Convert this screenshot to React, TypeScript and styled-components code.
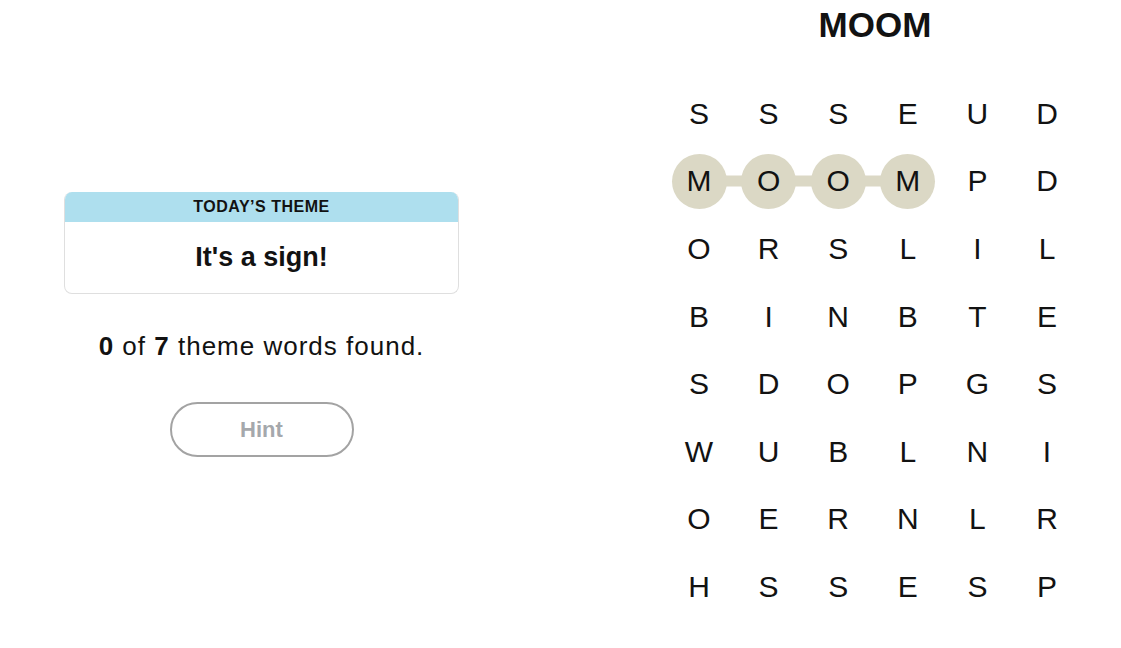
import React from 'react';
import styled, { createGlobalStyle } from 'styled-components';

const GRID = [
  'SSSEUD',
  'MOOMPD',
  'ORSLIL',
  'BINBTE',
  'SDOPGS',
  'WUBLNI',
  'OERNLR',
  'HSSESP',
];

// cells of the word being traced (row, col), in order
const PATH: [number, number][] = [
  [1, 0],
  [1, 1],
  [1, 2],
  [1, 3],
];

const GlobalStyle = createGlobalStyle`
  body {
    margin: 0;
    background: #ffffff;
    font-family: 'Liberation Sans', Arial, sans-serif;
    color: #121212;
  }
`;

const Page = styled.div`
  display: flex;
  width: 1121px;
  height: 648px;
`;

const Side = styled.section`
  width: 523px;
  padding-top: 192px;
  display: flex;
  flex-direction: column;
  align-items: center;
`;

const ThemeCard = styled.div`
  width: 393px;
  border: 1px solid #dfdfdf;
  border-top: none;
  border-radius: 8px;
  overflow: hidden;
`;

const ThemeHeader = styled.div`
  height: 30px;
  background: #aedfee;
  display: flex;
  align-items: center;
  justify-content: center;
  font-size: 16px;
  font-weight: 700;
  letter-spacing: 0.5px;
  text-transform: uppercase;
  color: #121212;
`;

const ThemeBody = styled.div`
  height: 71px;
  display: flex;
  align-items: center;
  justify-content: center;
  font-size: 27px;
  font-weight: 700;
`;

const Progress = styled.p`
  margin: 37px 0 0;
  font-size: 26px;
  line-height: 30px;
  letter-spacing: 1px;
  b {
    font-weight: 700;
  }
`;

const HintButton = styled.button`
  margin-top: 41px;
  width: 184px;
  height: 55px;
  border: 2px solid #a3a3a3;
  border-radius: 28px;
  background: #ffffff;
  font-family: 'Liberation Sans', Arial, sans-serif;
  font-size: 22px;
  font-weight: 700;
  color: #a5a8ac;
  cursor: default;
`;

const Board = styled.section`
  margin-left: 141px;
  width: 418px;
  display: flex;
  flex-direction: column;
  align-items: center;
`;

const Word = styled.h1`
  margin: 5px 0 0 4px;
  font-size: 35px;
  line-height: 40px;
  font-weight: 700;
`;

const Grid = styled.div`
  margin-top: 35px;
  display: grid;
  grid-template-columns: repeat(6, 69.6px);
  grid-auto-rows: 67.6px;
`;

const Cell = styled.div<{ $link?: boolean }>`
  position: relative;
  display: flex;
  align-items: center;
  justify-content: center;

  ${({ $link }) =>
    $link &&
    `
    &::before {
      content: '';
      position: absolute;
      left: 50%;
      top: 50%;
      width: 100%;
      height: 11px;
      transform: translateY(-50%);
      background: #dbd8c5;
    }
  `}
`;

const Letter = styled.span<{ $on?: boolean }>`
  position: relative;
  z-index: 1;
  width: 55px;
  height: 55px;
  border-radius: 50%;
  display: flex;
  align-items: center;
  justify-content: center;
  font-size: 30px;
  background: ${({ $on }) => ($on ? '#dbd8c5' : 'transparent')};
`;

const isOn = (r: number, c: number) =>
  PATH.some(([pr, pc]) => pr === r && pc === c);

const linksRight = (r: number, c: number) =>
  PATH.some(
    ([pr, pc], i) =>
      pr === r && pc === c && PATH[i + 1] && PATH[i + 1][0] === r && PATH[i + 1][1] === c + 1
  );

export default function App() {
  return (
    <>
      <GlobalStyle />
      <Page>
        <Side>
          <ThemeCard>
            <ThemeHeader>Today’s Theme</ThemeHeader>
            <ThemeBody>It's a sign!</ThemeBody>
          </ThemeCard>
          <Progress>
            <b>0</b> of <b>7</b> theme words found.
          </Progress>
          <HintButton>Hint</HintButton>
        </Side>
        <Board>
          <Word>MOOM</Word>
          <Grid>
            {GRID.map((row, r) =>
              row.split('').map((ch, c) => (
                <Cell key={`${r}-${c}`} $link={linksRight(r, c)}>
                  <Letter $on={isOn(r, c)}>{ch}</Letter>
                </Cell>
              ))
            )}
          </Grid>
        </Board>
      </Page>
    </>
  );
}
